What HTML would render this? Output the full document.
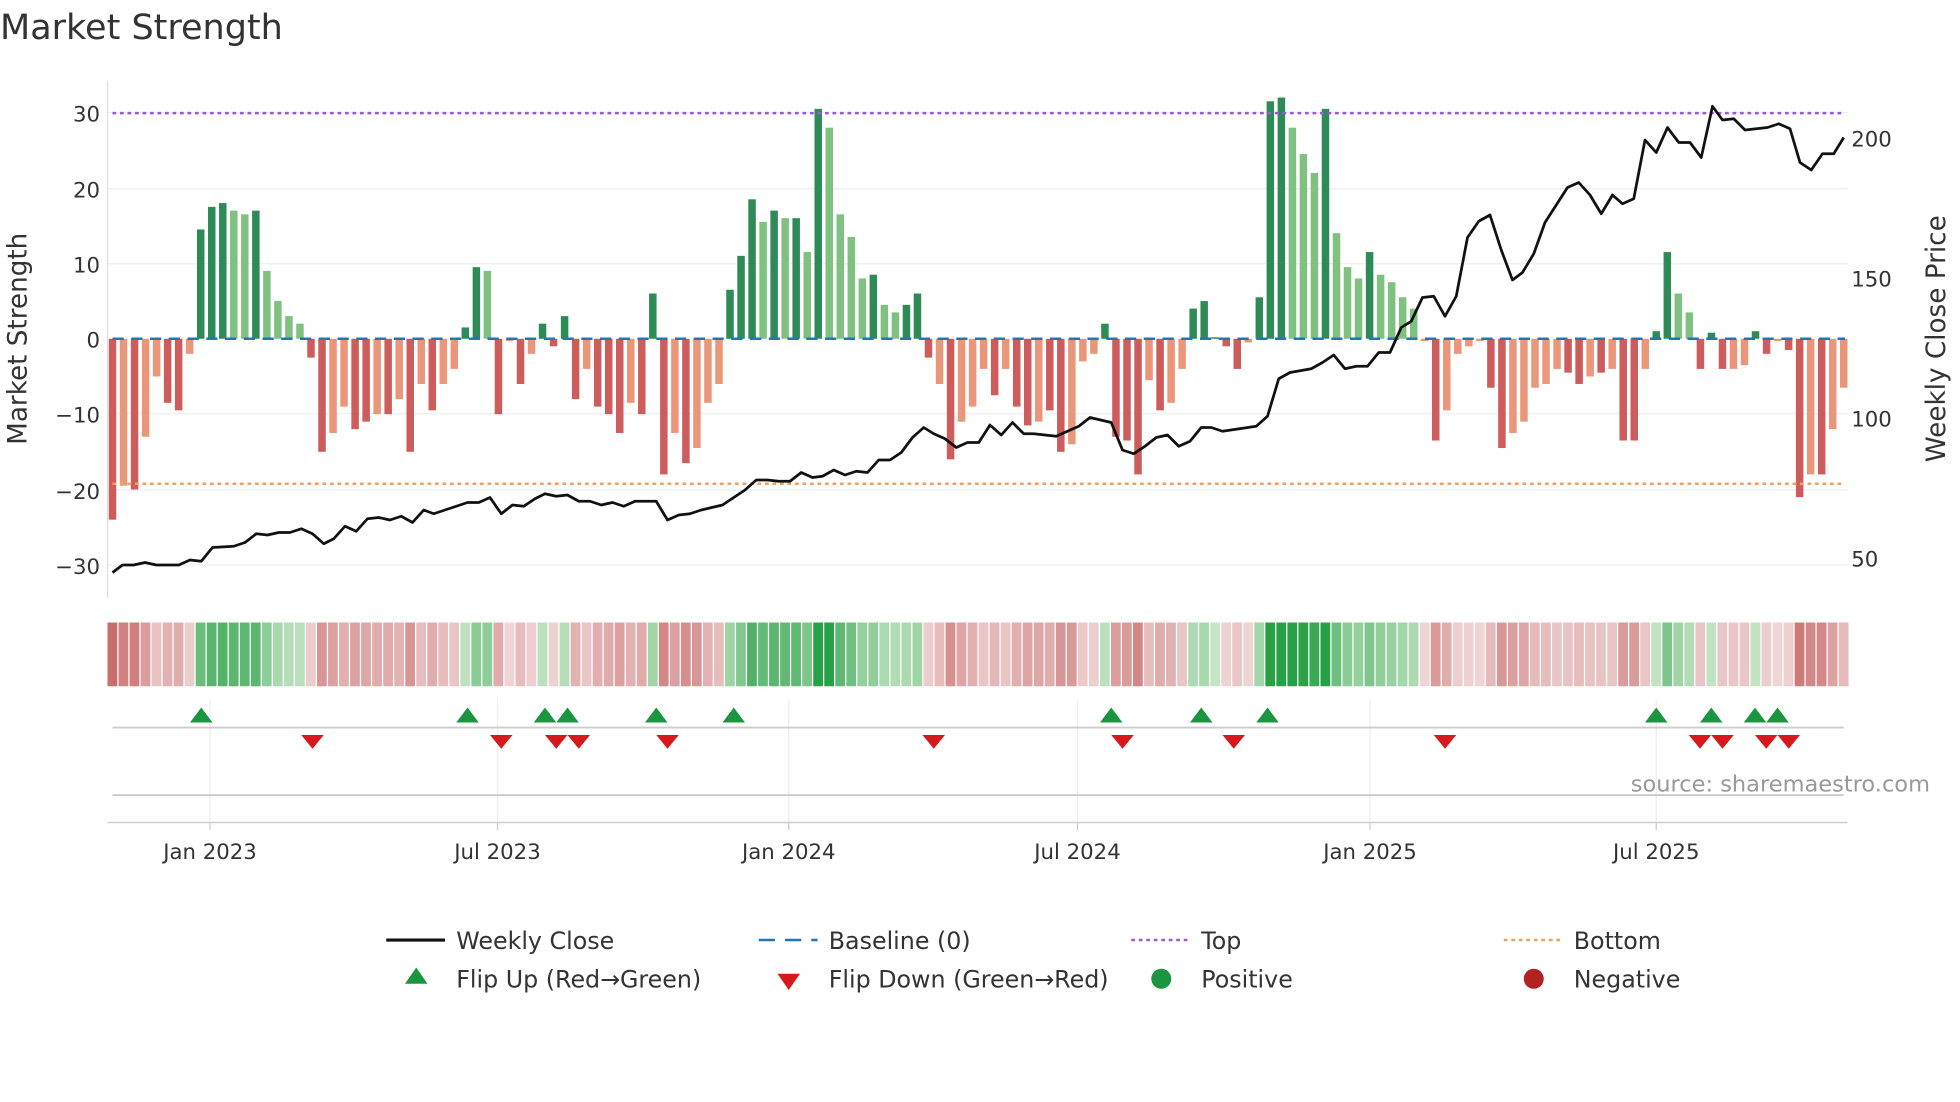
<!DOCTYPE html>
<html><head><meta charset="utf-8"><style>
html,body{margin:0;padding:0;background:#fff;}
svg{display:block;font-family:"DejaVu Sans","Liberation Sans",sans-serif;}
</style></head><body>
<svg id="c" width="1960" height="1102" viewBox="0 0 1568 881.6" preserveAspectRatio="none" xmlns="http://www.w3.org/2000/svg">
<text x="0" y="31" font-size="28" fill="#333">Market Strength</text>
<g stroke="#eee" stroke-width="1">
<line x1="86" x2="1478" y1="90" y2="90"/><line x1="86" x2="1478" y1="151" y2="151"/><line x1="86" x2="1478" y1="211" y2="211"/>
<line x1="86" x2="1478" y1="331" y2="331"/><line x1="86" x2="1478" y1="392" y2="392"/><line x1="86" x2="1478" y1="452" y2="452"/>
</g>
<line x1="86" x2="86" y1="65" y2="478" stroke="#ddd"/>
<g font-size="17" fill="#333" text-anchor="end">
<text x="80" y="97">30</text><text x="80" y="158">20</text><text x="80" y="218">10</text><text x="80" y="278">0</text>
<text x="80" y="338">−10</text><text x="80" y="399">−20</text><text x="80" y="459">−30</text>
</g>
<g font-size="17" fill="#333">
<text x="1481" y="117">200</text><text x="1481" y="229">150</text><text x="1481" y="341">100</text><text x="1481" y="453">50</text>
</g>
<text transform="translate(21,271) rotate(-90)" font-size="21" fill="#333" text-anchor="middle">Market Strength</text>
<text transform="translate(1556,271) rotate(-90)" font-size="21" fill="#333" text-anchor="middle">Weekly Close Price</text>
<g id="bars"></g>
<line x1="90" x2="1476" y1="271" y2="271" stroke="#1f77b4" stroke-width="2" stroke-dasharray="9,6"/>
<line x1="90" x2="1476" y1="90.5" y2="90.5" stroke="#9b59d6" stroke-width="2" stroke-dasharray="3,3"/>
<line x1="90" x2="1476" y1="387" y2="387" stroke="#f0a060" stroke-width="2" stroke-dasharray="3,3"/>
<polyline id="price" fill="none" stroke="#111" stroke-width="2.2" stroke-linejoin="round"/>
<g id="heat"></g>
<g stroke="#eee"><line x1="168" x2="168" y1="560" y2="658"/><line x1="398" x2="398" y1="560" y2="658"/><line x1="631" x2="631" y1="560" y2="658"/><line x1="862" x2="862" y1="560" y2="658"/><line x1="1096" x2="1096" y1="560" y2="658"/><line x1="1325" x2="1325" y1="560" y2="658"/></g>
<line x1="90" x2="1475" y1="582" y2="582" stroke="#ccc" stroke-width="1.5"/>
<line x1="90" x2="1475" y1="636" y2="636" stroke="#ccc" stroke-width="1.5"/>
<line x1="86" x2="1478" y1="658" y2="658" stroke="#ccc" stroke-width="1.2"/>
<g id="marks"></g>
<text x="1544" y="633" font-size="18" fill="#999" text-anchor="end">source: sharemaestro.com</text>
<g font-size="17" fill="#333" text-anchor="middle">
<text x="168" y="687">Jan 2023</text><text x="398" y="687">Jul 2023</text><text x="631" y="687">Jan 2024</text>
<text x="862" y="687">Jul 2024</text><text x="1096" y="687">Jan 2025</text><text x="1325" y="687">Jul 2025</text>
</g>
<g stroke="#ccc"><line x1="168" x2="168" y1="658" y2="664"/><line x1="398" x2="398" y1="658" y2="664"/><line x1="631" x2="631" y1="658" y2="664"/><line x1="862" x2="862" y1="658" y2="664"/><line x1="1096" x2="1096" y1="658" y2="664"/><line x1="1325" x2="1325" y1="658" y2="664"/></g>
<g font-size="19" fill="#333">
<line x1="309" x2="356" y1="752" y2="752" stroke="#111" stroke-width="2.5"/><text x="365" y="759">Weekly Close</text>
<line x1="607" x2="654" y1="752" y2="752" stroke="#1f77b4" stroke-width="2" stroke-dasharray="13,8"/><text x="663" y="759">Baseline (0)</text>
<line x1="905" x2="952" y1="752" y2="752" stroke="#9b59d6" stroke-width="2" stroke-dasharray="3,3"/><text x="961" y="759">Top</text>
<line x1="1203" x2="1250" y1="752" y2="752" stroke="#f0a060" stroke-width="2" stroke-dasharray="3,3"/><text x="1259" y="759">Bottom</text>
<polygon points="333,774 342,787 324,787" fill="#1a9641"/><text x="365" y="790">Flip Up (Red→Green)</text>
<polygon points="622,779 640,779 631,792" fill="#d7191c"/><text x="663" y="790">Flip Down (Green→Red)</text>
<circle cx="929" cy="783" r="8" fill="#1a9641"/><text x="961" y="790">Positive</text>
<circle cx="1227" cy="783" r="8" fill="#b22222"/><text x="1259" y="790">Negative</text>
</g>
</svg>
<script>
var NS="http://www.w3.org/2000/svg";
function el(t,a,p){var e=document.createElementNS(NS,t);for(var k in a)e.setAttribute(k,a[k]);p.appendChild(e);return e;}
var B=[[-24,1],[-19.5,0],[-20,1],[-13,0],[-5,0],[-8.5,1],[-9.5,1],[-2,0],[14.5,1],[17.5,1],[18,1],[17,0],[16.5,0],[17,1],[9,0],[5,0],[3,0],[2,0],[-2.5,1],[-15,1],[-12.5,0],[-9,0],[-12,1],[-11,1],[-10,0],[-10,1],[-8,0],[-15,1],[-6,0],[-9.5,1],[-6,0],[-4,0],[1.5,1],[9.5,1],[9,0],[-10,1],[-0.3,0],[-6,1],[-2,0],[2,1],[-1,1],[3,1],[-8,1],[-4,0],[-9,1],[-10,1],[-12.5,1],[-8.5,0],[-10,1],[6,1],[-18,1],[-12.5,0],[-16.5,1],[-14.5,0],[-8.5,0],[-6,0],[6.5,1],[11,1],[18.5,1],[15.5,0],[17,1],[16,0],[16,1],[11.5,0],[30.5,1],[28,0],[16.5,0],[13.5,0],[8,0],[8.5,1],[4.5,0],[3.5,0],[4.5,1],[6,1],[-2.5,1],[-6,0],[-16,1],[-11,0],[-9,0],[-4,0],[-7.5,1],[-4,0],[-9,1],[-11.5,1],[-11,0],[-9.5,1],[-15,1],[-14,0],[-3,0],[-2,0],[2,1],[-13,1],[-13.5,1],[-18,1],[-5.5,0],[-9.5,1],[-8.5,0],[-4,0],[4,1],[5,1],[0.2,1],[-1,1],[-4,1],[-0.5,0],[5.5,1],[31.5,1],[32,1],[28,0],[24.5,0],[22,0],[30.5,1],[14,0],[9.5,0],[8,0],[11.5,1],[8.5,0],[7.5,0],[5.5,0],[4,0],[-0.3,0],[-13.5,1],[-9.5,0],[-2,0],[-1,0],[-0.3,0],[-6.5,1],[-14.5,1],[-12.5,0],[-11,0],[-6.5,0],[-6,0],[-4,0],[-4.5,1],[-6,1],[-5,0],[-4.5,1],[-4,0],[-13.5,1],[-13.5,1],[-4,0],[1,1],[11.5,1],[6,0],[3.5,0],[-4,1],[0.8,1],[-4,1],[-4,0],[-3.5,0],[1,1],[-2,1],[-0.3,0],[-1.5,1],[-21,1],[-18,0],[-18,1],[-12,0],[-6.5,0]];
var n=B.length, x0=90, dx=(1475-90)/(n-1), z=271, s=6.03;
var g=document.getElementById('bars'), h=document.getElementById('heat');
B.forEach(function(b,i){
 var v=b[0],x=x0+i*dx,c;
 if(v>=0)c=b[1]?'#2e8b57':'#80c080'; else c=b[1]?'#cd5c5c':'#e9967a';
 var hh=Math.abs(v)*s;
 el('rect',{x:x-3,y:v>=0?z-hh:z,width:6,height:Math.max(hh,0.5),fill:c},g);
 var m=Math.min(Math.abs(v)/25,1),col;
 if(v>=0){var r=200-m*160,gg=230-m*70,bb=200-m*130;col='rgb('+(r|0)+','+(gg|0)+','+(bb|0)+')';}
 else {var r=240-m*40,gg=215-m*110,bb=215-m*110;col='rgb('+(r|0)+','+(gg|0)+','+(bb|0)+')';}
 el('rect',{x:x-4,y:498,width:dx-1,height:51,fill:col},h);
});
var P=[[90,458],[98,452],[107,452],[116,450],[125,452],[143,452],[152,448],[161,449],[170,438],[187,437],[196,434],[205,427],[214,428],[223,426],[232,426],[241,423],[250,427],[259,435],[267,431],[276,421],[285,425],[294,415],[303,414],[312,416],[321,413],[330,418],[339,408],[347,411],[356,408],[374,402],[383,402],[392,398],[401,411],[410,404],[419,405],[428,399],[436,395],[445,397],[454,396],[463,401],[472,401],[481,404],[490,402],[499,405],[508,401],[525,401],[534,416],[543,412],[552,411],[561,408],[578,404],[587,398],[596,392],[605,384],[614,384],[623,385],[632,385],[641,378],[650,382],[658,381],[667,376],[676,380],[685,377],[694,378],[703,368],[712,368],[721,362],[730,350],[739,342],[747,347],[756,351],[765,358],[774,354],[783,354],[792,340],[801,348],[810,338],[819,347],[827,347],[845,349],[854,345],[863,341],[872,334],[889,338],[898,360],[907,363],[916,357],[925,350],[934,348],[943,357],[952,353],[961,342],[969,342],[978,345],[1005,341],[1014,333],[1023,303],[1032,298],[1049,295],[1058,290],[1067,284],[1076,295],[1085,293],[1094,293],[1103,282],[1112,282],[1121,262],[1129,257],[1138,238],[1147,237],[1156,253],[1165,237],[1174,190],[1183,177],[1192,172],[1201,200],[1210,224],[1218,218],[1227,203],[1236,178],[1245,164],[1254,150],[1263,146],[1272,156],[1281,171],[1290,156],[1298,163],[1307,159],[1316,112],[1325,122],[1334,102],[1343,114],[1352,114],[1361,126],[1370,85],[1378,96],[1387,95],[1396,104],[1414,102],[1423,99],[1432,103],[1440,130],[1449,136],[1458,123],[1467,123],[1475,110]];
document.getElementById('price').setAttribute('points',P.map(function(p){return p.join(',')}).join(' '));
var mk=document.getElementById('marks');
[161,374,436,454,525,587,889,961,1014,1325,1369,1404,1422].forEach(function(x){el('polygon',{points:x+',566 '+(x+9)+',578 '+(x-9)+',578',fill:'#1a9641'},mk);});
[250,401,445,463,534,747,898,987,1156,1360,1378,1413,1431].forEach(function(x){el('polygon',{points:(x-9)+',588 '+(x+9)+',588 '+x+',599',fill:'#d7191c'},mk);});
</script>
</body></html>
